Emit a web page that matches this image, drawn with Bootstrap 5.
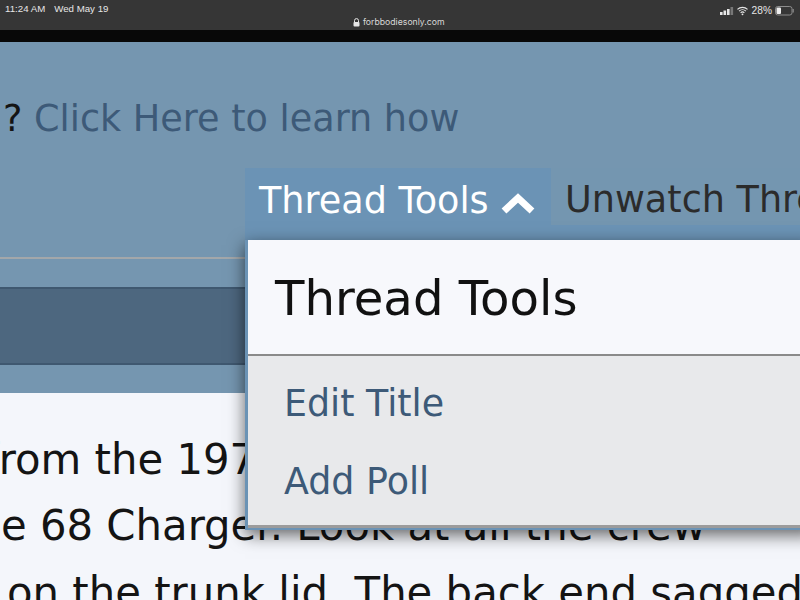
<!DOCTYPE html>
<html lang="en">
<head>
  <meta charset="UTF-8" />
  <meta name="viewport" content="width=device-width, initial-scale=1.0"/>
  <title>Thread Tools</title>
  <link href="https://cdn.jsdelivr.net/npm/bootstrap@5.3.3/dist/css/bootstrap.min.css" rel="stylesheet">
  <style>
    html, body {
      height: 600px;
      overflow: hidden;
    }

    body {
      background-color: #f4f6fb;
      font-family: "DejaVu Sans", Verdana, sans-serif;
      color: #141414;
    }

    .ipad-bar {
      height: 30px;
      background-color: #363636;
      color: #e6e6e6;
      font-family: "Liberation Sans", Arial, sans-serif;
      font-size: 9.7px;
      padding: 0 6px 0 5px;
    }

    .bar-clock {
      padding-top: 2px;
    }

    .bar-date {
      margin-left: 9px;
    }

    .bar-url {
      font-family: "Inter", "Liberation Sans", sans-serif;
      font-size: 8.7px;
      color: #d8d8d8;
      margin-left: 245px;
      padding-top: 16px;
    }

    .bar-right {
      padding-top: 2px;
      gap: 3px;
      font-size: 10.2px;
    }

    .bar-pct {
      margin-left: 1px;
      padding-top: 1px;
    }

    .black-band {
      height: 12px;
      background-color: #080808;
    }

    .forum-head {
      height: 351px;
      background-color: #7596b0;
      padding-top: 52px;
    }

    .howto-line {
      font-size: 36.6px;
      line-height: 50px;
      margin: 0 0 0 3px;
      white-space: nowrap;
    }

    .howto-line a {
      color: #3d5a78;
      text-decoration: none;
    }

    .tools-row {
      margin: 24px 0 0 245px;
      height: 72px;
      background-color: #6b93b5;
    }

    .tools-btn {
      width: 306px;
      height: 72px;
      background-color: #6b93b5;
      color: #fff;
      font-size: 36.6px;
      padding: 0 0 0 14px;
      border: 0;
      border-radius: 4px 4px 0 0;
      line-height: 46px;
      white-space: nowrap;
      align-self: flex-start;
    }

    .btn-label {
      display: block;
      margin-top: -6px;
    }

    .tools-btn svg {
      margin: 0 0 0 12px;
      vertical-align: -1px;
    }

    .unwatch-btn {
      width: 260px;
      height: 57px;
      background-color: #7496b0;
      color: #2b2b2b;
      font-size: 36.6px;
      padding: 9px 0 0 14px;
      line-height: 46px;
      white-space: nowrap;
      flex: none;
    }

    .head-rule {
      height: 2px;
      margin-top: 17px;
      background-color: #a3a7aa;
    }

    .dark-strip {
      height: 78px;
      margin-top: 28px;
      background-color: #4d677f;
      border-top: 2px solid #3f5870;
      border-bottom: 2px solid #3f5870;
    }

    .post-text {
      font-size: 41.8px;
      line-height: 66px;
      padding-top: 34px;
      white-space: nowrap;
    }

    .post-line-a {
      margin-left: -16px;
    }

    .post-line-b {
      margin-left: -42px;
    }

    .post-line-c {
      margin: 1px 0 0 7px;
    }

    .tools-menu {
      position: absolute;
      display: block;
      top: 240px;
      left: 245px;
      width: 570px;
      height: 290px;
      padding: 0;
      margin: 0;
      background-color: #e8e9eb;
      border: 0;
      border-left: 3px solid #6b93b5;
      border-bottom: 2px solid #6b93b5;
      border-radius: 0;
      box-shadow: inset 0 -3px 0 #9c9c9c, 0 5px 16px rgba(0, 0, 0, 0.6);
    }

    .tools-menu .dropdown-header {
      height: 114px;
      background-color: #f7f8fc;
      color: #111;
      font-size: 48.2px;
      padding: 29px 0 0 27px;
      line-height: 58px;
    }

    .tools-menu .dropdown-divider {
      height: 2px;
      margin: 0;
      border: 0;
      background-color: #8a8a8a;
      opacity: 1;
    }

    .tools-menu .dropdown-item {
      color: #3d5a78;
      font-size: 36.4px;
      line-height: 46px;
      padding: 0 0 0 36px;
      background: none;
    }

    .tools-menu .first-item {
      padding-top: 25px;
    }

    .tools-menu .second-item {
      padding-top: 32px;
    }
  </style>
</head>
<body>

  <div class="ipad-bar d-flex">
    <div class="bar-clock">11:24 AM<span class="bar-date">Wed May 19</span></div>
    <div class="bar-url">
      <svg width="7" height="9" viewBox="0 0 7 9"><path d="M1.5 4V2.6a2 2 0 0 1 4 0V4" fill="none" stroke="#e6e6e6"/><rect x="0.5" y="4" width="6" height="4.6" rx="1" fill="#e6e6e6"/></svg>
      forbbodiesonly.com
    </div>
    <div class="bar-right ms-auto d-flex align-items-start">
      <svg width="14" height="10" viewBox="0 0 14 10" class="mt-1"><rect x="0" y="6" width="2.6" height="3" fill="#e6e6e6"/><rect x="3.5" y="4.5" width="2.6" height="4.5" fill="#e6e6e6"/><rect x="7" y="3" width="2.6" height="6" fill="#e6e6e6"/><rect x="10.5" y="1" width="2.6" height="8" fill="#777"/></svg>
      <svg width="11" height="10" viewBox="0 0 12 10" class="mt-1"><path d="M0.5 3.2a8 8 0 0 1 11 0M2.3 5.1a5.4 5.4 0 0 1 7.4 0M4 7a2.9 2.9 0 0 1 4 0" fill="none" stroke="#e6e6e6" stroke-width="1.3"/><circle cx="6" cy="8.6" r="1" fill="#e6e6e6"/></svg>
      <span class="bar-pct">28%</span>
      <svg width="19" height="10" viewBox="0 0 19 10" class="mt-1"><rect x="0.5" y="0.5" width="16.5" height="8.5" rx="2.2" fill="none" stroke="#8c8c8c"/><rect x="1.5" y="1.5" width="4.5" height="6.5" rx="1" fill="#eee"/><rect x="17.6" y="3" width="1.2" height="3.5" fill="#8c8c8c"/></svg>
    </div>
  </div>
  <div class="black-band"></div>

  <div class="forum-head">
    <p class="howto-line">? <a href="#">Click Here to learn how</a></p>
    <div class="tools-row d-flex">
      <button type="button" class="tools-btn flex-shrink-0 text-start"><span class="btn-label">Thread Tools<svg width="34" height="22" viewBox="0 0 34 22"><path d="M3 19 17 6l14 13" fill="none" stroke="#fff" stroke-width="7"/></svg></span></button>
      <div class="unwatch-btn">Unwatch Thread</div>
    </div>
    <div class="head-rule"></div>
    <div class="dark-strip"></div>
  </div>

  <div class="post-text">
    <div class="post-line-a">from the 1970 Charger.</div>
    <div class="post-line-b">the 68 Charger. Look at all the crew</div>
    <div class="post-line-c">on the trunk lid. The back end sagged</div>
  </div>

  <div class="dropdown-menu tools-menu">
    <div class="dropdown-header">Thread Tools</div>
    <hr class="dropdown-divider">
    <a class="dropdown-item first-item" href="#">Edit Title</a>
    <a class="dropdown-item second-item" href="#">Add Poll</a>
  </div>

  <script src="https://cdn.jsdelivr.net/npm/bootstrap@5.3.3/dist/js/bootstrap.bundle.min.js"></script>
</body>
</html>
